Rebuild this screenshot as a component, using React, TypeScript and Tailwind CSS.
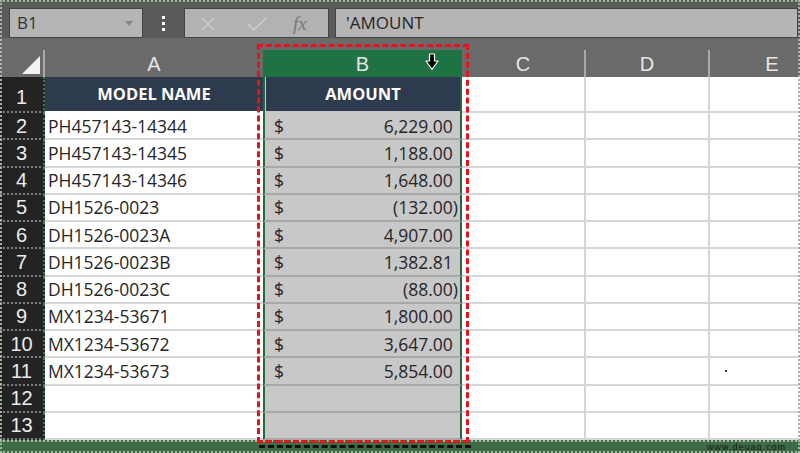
import React from 'react';

const rows: { name: string; amount: string }[] = [
  { name: 'PH457143-14344', amount: '6,229.00' },
  { name: 'PH457143-14345', amount: '1,188.00' },
  { name: 'PH457143-14346', amount: '1,648.00' },
  { name: 'DH1526-0023', amount: '(132.00)' },
  { name: 'DH1526-0023A', amount: '4,907.00' },
  { name: 'DH1526-0023B', amount: '1,382.81' },
  { name: 'DH1526-0023C', amount: '(88.00)' },
  { name: 'MX1234-53671', amount: '1,800.00' },
  { name: 'MX1234-53672', amount: '3,647.00' },
  { name: 'MX1234-53673', amount: '5,854.00' },
  { name: '', amount: '' },
  { name: '', amount: '' },
];

function RowHeader({ n, tall }: { n: number; tall?: boolean }) {
  return (
    <div
      className={`w-[45px] shrink-0 flex items-center justify-center bg-[#232323] border-r-2 border-r-[#3b7a4d] border-b-2 border-dotted border-b-[#7d7d7d] text-[#ececec] text-[20px] font-['Liberation_Sans',Arial,sans-serif] ${
        tall ? 'pt-[6px]' : ''
      }`}
    >
      {n}
    </div>
  );
}

export default function App() {
  return (
    <div className="relative w-[800px] h-[453px] overflow-hidden bg-[#5a5a5a] font-['Open_Sans',sans-serif]">
      {/* Barra de fórmulas */}
      <div className="flex items-start h-[38px] pt-[8px] pl-[9px]">
        <div className="w-[134px] h-[30px] shrink-0 flex items-center justify-between pl-[7px] pr-[9px] bg-[#b5b5b5] border border-[#444]">
          <span className="text-[17px] text-[#333]">B1</span>
          <svg width="8" height="5" viewBox="0 0 8 5">
            <path d="M0 0 L8 0 L4 5 Z" fill="#858585" />
          </svg>
        </div>
        <div className="w-[41px] h-[30px] shrink-0 flex flex-col items-center justify-center gap-[3px]">
          <span className="w-[3px] h-[3px] bg-white" />
          <span className="w-[3px] h-[3px] bg-white" />
          <span className="w-[3px] h-[3px] bg-white" />
        </div>
        <div className="w-[145px] h-[30px] shrink-0 flex items-center bg-[#b2b2b2] border border-[#444] pl-[15px]">
          <svg width="16" height="16" viewBox="0 0 16 16" className="mt-[1px]">
            <path d="M2 2 L14 14 M14 2 L2 14" stroke="#cacaca" strokeWidth="1.6" fill="none" />
          </svg>
          <svg width="20" height="16" viewBox="0 0 20 16" className="ml-[31px] mt-[1px]">
            <path d="M1 8 L7 14 L19 2" stroke="#cacaca" strokeWidth="1.8" fill="none" />
          </svg>
          <span className="ml-[26px] text-[19px] italic text-[#777] font-['Liberation_Serif',serif] leading-none">
            fx
          </span>
        </div>
        <div className="flex-1 h-[30px] ml-[6px] mr-[2px] flex items-center pl-[10px] bg-[#b5b5b5] border border-[#444]">
          <span className="text-[17px] text-[#262626]">'AMOUNT</span>
        </div>
      </div>

      {/* Cabeçalho das colunas */}
      <div className="flex items-end h-[39px] bg-[#6a6a6a] text-[20px] text-[#e6e6e6] font-['Liberation_Sans',Arial,sans-serif]">
        <div className="w-[45px] h-[27px] shrink-0 flex items-end justify-end pr-[3px] pb-[3px] border-r-2 border-[#a9a9a9]">
          <svg width="18" height="18" viewBox="0 0 18 18">
            <path d="M18 0 L18 18 L0 18 Z" fill="#f2f2f2" />
          </svg>
        </div>
        <div className="w-[218px] h-[27px] shrink-0 flex items-center justify-center">A</div>
        <div className="relative w-[199px] h-[27px] shrink-0 flex items-center justify-center bg-[#1f7244]">
          B
          <svg
            width="14"
            height="18"
            viewBox="0 0 14 18"
            className="absolute left-[162px] top-[3px]"
          >
            <path d="M4.5 1 H9.5 V8 H13 L7 16.5 L1 8 H4.5 Z" fill="#000" stroke="#fff" strokeWidth="1.2" strokeLinejoin="round" />
          </svg>
        </div>
        <div className="w-[124px] h-[27px] shrink-0 flex items-center justify-center border-r-2 border-[#a9a9a9]">C</div>
        <div className="w-[124px] h-[27px] shrink-0 flex items-center justify-center border-r-2 border-[#a9a9a9]">D</div>
        <div className="w-[124px] h-[27px] shrink-0 flex items-center justify-center">E</div>
      </div>

      {/* Linha 1 */}
      <div className="flex h-[36px]">
        <RowHeader n={1} tall />
        <div className="w-[218px] shrink-0 flex items-center justify-center bg-[#2e3a4e] border-b-2 border-white text-white font-bold text-[16.5px]">
          MODEL NAME
        </div>
        <div className="w-[199px] shrink-0 flex bg-[#c8c8c8] border-x-2 border-[#1f6b3f]">
          <div className="flex-1 flex items-center justify-center bg-[#2e3a4e] ml-[1px] border-b-2 border-[#c8c8c8] text-white font-bold text-[16.5px]">
            AMOUNT
          </div>
        </div>
        <div className="w-[124px] shrink-0 bg-white border-r-2 border-b-2 border-[#d6d6d6]" />
        <div className="w-[124px] shrink-0 bg-white border-r-2 border-b-2 border-[#d6d6d6]" />
        <div className="w-[124px] shrink-0 bg-white border-b-2 border-[#d6d6d6]" />
      </div>

      {/* Linhas 2 a 13 */}
      {rows.map((r, i) => {
        const negative = r.amount.startsWith('(');
        return (
          <div key={i} className="flex h-[27.25px] text-[17.5px] text-[#262626]">
            <RowHeader n={i + 2} />
            <div className="w-[218px] shrink-0 flex items-center pl-[3px] bg-white border-b-2 border-[#d6d6d6]">
              {r.name}
            </div>
            <div className="w-[199px] shrink-0 flex items-center justify-between pl-[9px] pr-[2px] bg-[#c8c8c8] border-x-2 border-x-[#1f6b3f] border-b-2 border-b-[#a8a8a8]">
              <span>{r.amount ? '$' : ''}</span>
              <span>
                {r.amount}
                {r.amount && !negative && <span className="invisible">)</span>}
              </span>
            </div>
            <div className="w-[124px] shrink-0 bg-white border-r-2 border-b-2 border-[#d6d6d6]" />
            <div className="w-[124px] shrink-0 bg-white border-r-2 border-b-2 border-[#d6d6d6]" />
            <div className="w-[124px] shrink-0 flex items-center pl-[15px] bg-white border-b-2 border-[#d6d6d6]">
              {i === 9 && <span className="w-[2px] h-[2px] bg-[#2b3a7a]" />}
            </div>
          </div>
        );
      })}

      {/* Faixa inferior */}
      <div className="flex items-center justify-end h-[13px] pr-[14px] bg-[#3e6a46] border-t-2 border-dotted border-[#a7bca4]">
        <span className="text-[9px] leading-none tracking-[1px] text-[#151515] font-['Liberation_Sans',Arial,sans-serif]">
          www.deuaq.com
        </span>
      </div>

      {/* Seleção tracejada em vermelho */}
      <div className="absolute left-[257px] top-[44px] w-[212px] h-[399px] border-[3px] border-dashed border-[#e3141b] pointer-events-none" />
      <div className="absolute left-[259px] top-[445px] w-[212px] h-[3px] border-b-[3px] border-dashed border-[#111] pointer-events-none" />

      {/* Moldura pontilhada */}
      <div className="absolute inset-0 border-2 border-dotted border-[#a3b99f] pointer-events-none" />
    </div>
  );
}
